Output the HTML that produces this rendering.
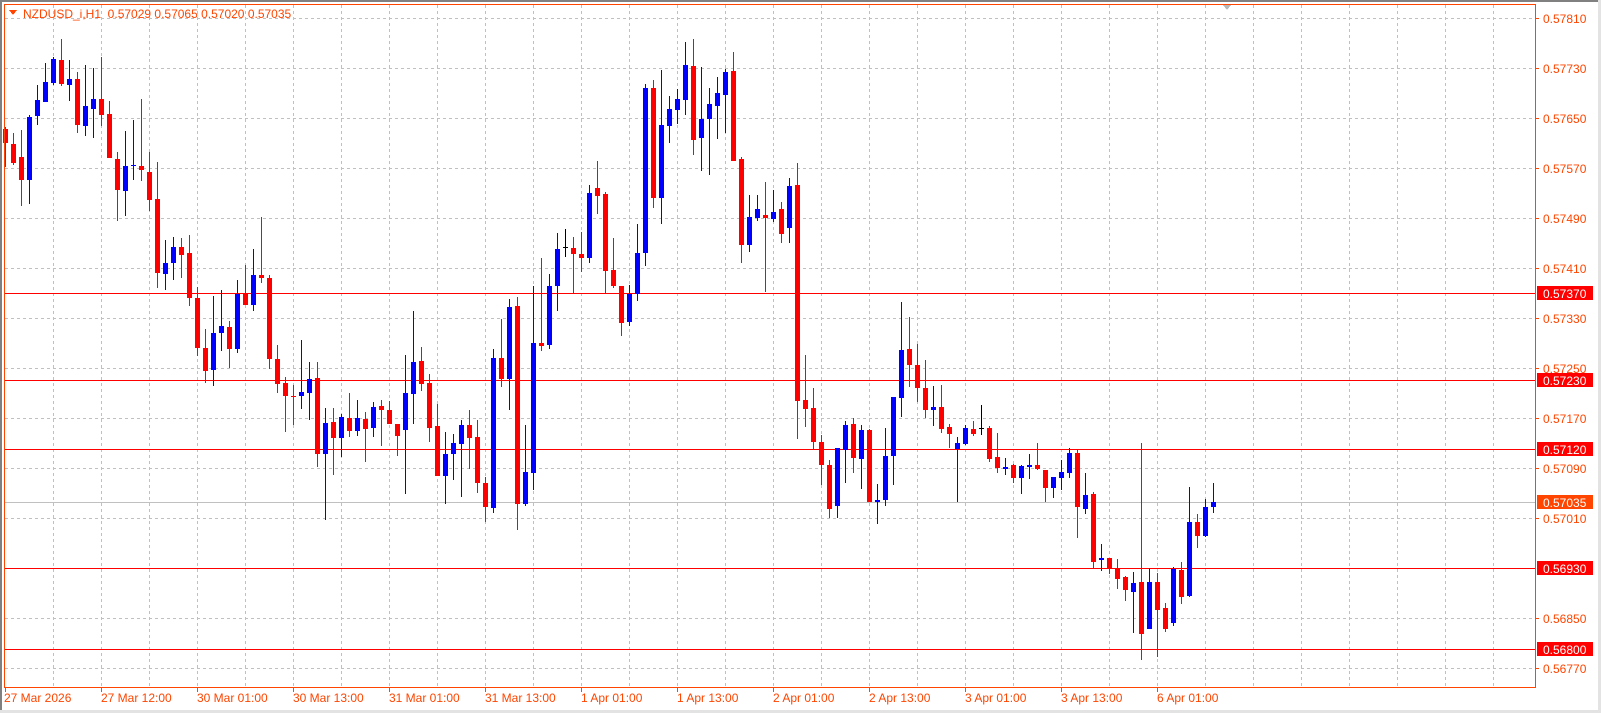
<!DOCTYPE html>
<html><head><meta charset="utf-8"><style>
html,body{margin:0;padding:0;background:#fff;width:1601px;height:713px;overflow:hidden}
svg{display:block}
text{font-family:"Liberation Sans",sans-serif;font-size:12px}
</style></head><body>
<svg id="s" width="1601" height="713" xmlns="http://www.w3.org/2000/svg" shape-rendering="crispEdges">
<rect x="0" y="0" width="1601" height="713" fill="#fff"/>
<rect x="0" y="0" width="1601" height="2" fill="#808080"/>
<rect x="0" y="0" width="2" height="713" fill="#808080"/>
<rect x="0" y="710" width="1601" height="3" fill="#e3e3e3"/>
<rect x="1598" y="0" width="3" height="713" fill="#e3e3e3"/>
<g id="grid"></g>
<g id="lines">
<rect x="4" y="502" width="1531" height="1" fill="#c0c0c0"/>
<rect x="4" y="293" width="1531" height="1" fill="#ff0000"/>
<rect x="4" y="380" width="1531" height="1" fill="#ff0000"/>
<rect x="4" y="449" width="1531" height="1" fill="#ff0000"/>
<rect x="4" y="568" width="1531" height="1" fill="#ff0000"/>
<rect x="4" y="649" width="1531" height="1" fill="#ff0000"/>
</g>
<g id="c"></g>
<rect x="4.5" y="4.5" width="1531" height="683" fill="none" stroke="#ff4500" stroke-width="1"/>
<polygon points="1223,5 1231,5 1227,10" fill="#b8b8b8"/>
<polygon points="9,10 17,10 13,15" fill="#ff4500"/>
<text x="23" y="18" fill="#ff4500">NZDUSD_i,H1&#160;&#160;0.57029 0.57065 0.57020 0.57035</text>
<g id="ax"></g>
</svg>
<script>
var ns="http://www.w3.org/2000/svg";
function el(p,t,a,txt){var e=document.createElementNS(ns,t);for(var k in a)e.setAttribute(k,a[k]);if(txt)e.textContent=txt;p.appendChild(e);return e;}
var g=document.getElementById('grid');
for(var y=18;y<=668;y+=50){el(g,'line',{x1:5,x2:1535,y1:y+.5,y2:y+.5,stroke:'#c0c0c0','stroke-dasharray':'3,3'});}
for(var x=53;x<1535;x+=48){el(g,'line',{x1:x+.5,x2:x+.5,y1:5,y2:687,stroke:'#c0c0c0','stroke-dasharray':'3,3'});}
var D=`r 129 143 127 167
r 144 163 133 165
r 157 180 130 206
b 117 180 115 204
b 100 116 85 125
b 82 102 63 102
b 59 83 57 85
r 60 84 39 86
b 79 85 60 101
r 79 125 72 133
b 106 126 65 136
b 99 109 68 138
r 99 115 57 126
r 114 158 101 158
r 159 190 152 221
b 166 191 131 216
b 165 166 120 180
r 166 170 99 181
r 172 200 152 211
r 199 273 162 288
b 263 274 240 290
b 247 263 237 280
r 247 255 238 278
r 253 298 235 306
r 298 348 287 356
r 348 371 329 383
b 333 370 296 386
b 326 333 290 351
r 327 349 321 368
b 294 349 280 353
r 293 305 265 305
b 275 305 249 311
r 275 278 217 283
r 278 359 275 369
r 359 384 345 393
r 383 396 377 432
r 396 397 385 425
b 392 396 340 409
b 379 393 362 420
r 378 454 362 467
b 423 454 408 520
r 422 438 408 475
b 417 438 414 457
r 418 431 393 437
b 418 431 400 436
r 419 429 412 462
b 407 428 402 437
r 406 410 400 446
r 410 424 401 424
r 424 436 424 456
b 393 430 355 494
b 362 394 311 424
r 361 384 347 391
r 383 428 374 442
r 426 476 404 476
b 454 476 432 504
b 443 454 434 480
b 425 444 420 497
r 425 438 410 469
r 437 483 420 493
r 483 507 477 522
b 358 508 349 513
r 358 379 319 387
b 307 379 299 410
r 306 504 297 530
b 472 504 425 506
b 343 473 286 490
r 343 346 258 351
b 286 345 274 349
b 249 286 233 311
k 247 248 229 257
r 248 254 237 293
r 254 258 232 272
b 193 258 185 263
r 188 196 161 214
r 194 271 192 293
r 270 286 238 288
r 286 323 286 336
b 294 322 285 326
b 253 294 224 301
b 88 253 84 266
r 88 198 80 208
b 125 198 70 224
b 109 126 96 143
b 99 110 89 124
b 65 100 42 115
r 66 140 39 155
b 119 138 67 171
b 104 119 88 175
b 93 106 77 139
b 72 95 69 133
r 71 161 52 161
r 159 245 157 263
b 217 245 195 252
b 209 218 195 221
r 215 218 182 292
b 212 219 190 222
r 209 234 202 243
b 186 228 178 243
r 185 401 163 439
r 400 409 355 427
r 408 442 388 449
r 442 465 435 485
r 465 509 460 518
b 448 506 448 518
b 425 450 421 483
r 424 458 418 473
b 430 459 425 489
r 430 502 429 502
b 500 502 484 524
b 456 500 428 506
b 397 456 397 485
b 350 398 302 417
r 349 365 317 387
r 365 388 344 402
r 388 410 360 418
b 407 410 386 426
r 407 429 385 433
r 427 434 424 448
b 443 449 437 502
b 428 444 425 445
r 429 434 421 436
k 428 429 405 435
r 428 459 426 462
r 457 468 433 473
b 467 469 458 475
r 465 478 464 483
b 466 478 465 494
b 465 467 454 479
r 465 469 443 470
r 470 488 470 502
b 477 488 477 498
b 472 478 460 490
b 453 473 448 478
r 453 507 450 538
b 495 509 473 514
r 494 562 492 568
b 558 560 544 571
r 558 568 558 574
r 569 579 559 589
r 577 590 576 601
b 583 592 572 633
r 582 634 443 660
b 582 629 568 629
r 582 610 573 657
r 608 629 603 632
b 569 623 567 626
r 570 597 562 604
b 522 596 487 597
r 522 536 514 548
b 507 536 499 537
b 502 507 483 513`.split('\n');
var c=document.getElementById('c');
var col={r:'#ff0000',b:'#0000ff',k:'#000000'};
D.forEach(function(l,i){var p=l.trim().split(' ');var f=col[p[0]];var bt=+p[1],bb=+p[2],wt=+p[3],wb=+p[4];var cx=5+8*i;
el(c,'rect',{x:cx,y:wt,width:1,height:Math.max(1,wb-wt),fill:f});
el(c,'rect',{x:cx-2,y:bt,width:5,height:Math.max(1,bb-bt),fill:f});});
var ax=document.getElementById('ax');
var pl=[[18,'0.57810'],[68,'0.57730'],[118,'0.57650'],[168,'0.57570'],[218,'0.57490'],[268,'0.57410'],[318,'0.57330'],[368,'0.57250'],[418,'0.57170'],[468,'0.57090'],[518,'0.57010'],[618,'0.56850'],[668,'0.56770']];
pl.forEach(function(p){el(ax,'rect',{x:1535,y:p[0],width:4,height:1,fill:'#ff4500'});el(ax,'text',{x:1543,y:p[0]+5,fill:'#ff4500'},p[1]);});
[[293,'0.57370','#ff0000'],[380,'0.57230','#ff0000'],[449,'0.57120','#ff0000'],[502,'0.57035','#ff4500'],[568,'0.56930','#ff0000'],[649,'0.56800','#ff0000']].forEach(function(p){
el(ax,'rect',{x:1537,y:p[0]-7,width:56,height:14,fill:p[2]});el(ax,'text',{x:1543,y:p[0]+5,fill:'#fff'},p[1]);});
['27 Mar 2026','27 Mar 12:00','30 Mar 01:00','30 Mar 13:00','31 Mar 01:00','31 Mar 13:00','1 Apr 01:00','1 Apr 13:00','2 Apr 01:00','2 Apr 13:00','3 Apr 01:00','3 Apr 13:00','6 Apr 01:00'].forEach(function(t,i){var x=5+96*i;
el(ax,'rect',{x:x,y:687,width:1,height:5,fill:'#ff4500'});el(ax,'text',{x:x+(i==0?-1:0),y:702,fill:'#ff4500'},t);});
</script>
</body></html>
